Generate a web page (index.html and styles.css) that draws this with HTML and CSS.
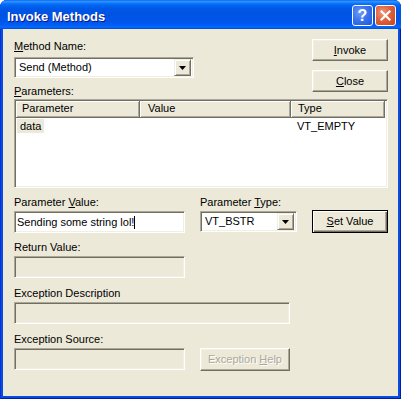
FILE: index.html
```html
<!DOCTYPE html>
<html>
<head>
<meta charset="utf-8">
<link rel="stylesheet" href="styles.css">
</head>
<body>
<div class="window">
  <div class="titlebar">
    <span class="title">Invoke Methods</span>
    <div class="tbtns">
      <div class="tbtn help">?</div>
      <div class="tbtn close">
        <svg width="11" height="11" viewBox="0 0 11 11"><path d="M1.5 1.5 L9.5 9.5 M9.5 1.5 L1.5 9.5" stroke="#fff" stroke-width="2.2" stroke-linecap="square"/></svg>
      </div>
    </div>
  </div>
  <div class="client">
    <div class="top">
      <div class="top-left">
        <div class="label"><u>M</u>ethod Name:</div>
        <div class="combo combo-method">
          <span class="combo-text">Send (Method)</span>
          <span class="drop"><svg width="7" height="4" viewBox="0 0 7 4"><path d="M0 0H7L3.5 4Z" fill="#000"/></svg></span>
        </div>
        <div class="label label-params"><u>P</u>arameters:</div>
      </div>
      <div class="top-right">
        <div class="btn"><u>I</u>nvoke</div>
        <div class="btn btn-close"><u>C</u>lose</div>
      </div>
    </div>

    <div class="listview">
      <div class="lv-header">
        <div class="hcell c1">Parameter</div>
        <div class="hcell c2">Value</div>
        <div class="hcell c3">Type</div>
      </div>
      <div class="lv-row">
        <div class="cell c1"><span class="sel">data</span></div>
        <div class="cell c2"></div>
        <div class="cell c3">VT_EMPTY</div>
      </div>
    </div>

    <div class="row row-value">
      <div class="col col1">
        <div class="label">Parameter <u>V</u>alue:</div>
        <div class="textbox">Sending some string lol!<span class="caret"></span></div>
      </div>
      <div class="col col2">
        <div class="label">Parameter <u>T</u>ype:</div>
        <div class="combo combo-type">
          <span class="combo-text">VT_BSTR</span>
          <span class="drop"><svg width="7" height="4" viewBox="0 0 7 4"><path d="M0 0H7L3.5 4Z" fill="#000"/></svg></span>
        </div>
      </div>
      <div class="col col3">
        <div class="btn btn-default"><u>S</u>et Value</div>
      </div>
    </div>

    <div class="row row-return">
      <div class="col col1">
        <div class="label">Return Value:</div>
        <div class="textbox disabled"></div>
      </div>
    </div>

    <div class="row row-desc">
      <div class="col">
        <div class="label">Exception Description</div>
        <div class="textbox disabled wide"></div>
      </div>
    </div>

    <div class="row row-source">
      <div class="col col1">
        <div class="label">Exception Source:</div>
        <div class="textbox disabled"></div>
      </div>
      <div class="col col2b">
        <div class="btn btn-disabled">Exception <u>H</u>elp</div>
      </div>
    </div>
  </div>
</div>
</body>
</html>
```

FILE: styles.css
```css
html, body {
  margin: 0;
  padding: 0;
  background: #ffffff;
}

.window {
  width: 401px;
  height: 399px;
  box-sizing: border-box;
  background: #0A4BE0;
  border-radius: 7px 7px 0 0;
  display: flex;
  flex-direction: column;
  overflow: hidden;
  box-shadow: inset 1px 0 #0831D9, inset -1px 0 #001EA0, inset 0 -1px #001EA0;
}

.titlebar {
  height: 29px;
  flex: none;
  display: flex;
  align-items: flex-start;
  background: linear-gradient(to bottom,
    #0058EE 0px, #3593FF 1px, #288EFF 2px, #127DFF 3px, #0470FC 4px,
    #0262EE 6px, #0057E5 9px, #0054E3 14px, #0055EB 22px, #005BF5 25px,
    #026AFE 27px, #0062EF 28px, #0043CF 29px);
  border-radius: 7px 7px 0 0;
}

.title {
  font-family: "Liberation Sans", Arial, sans-serif;
  font-weight: bold;
  font-size: 13px;
  color: #ffffff;
  line-height: 27px;
  padding: 3px 0 0 7px;
  text-shadow: 1px 1px #0A1883;
  flex: 1;
}

.tbtns {
  display: flex;
  gap: 2px;
  padding: 5px 5px 0 0;
}

.tbtn {
  width: 21px;
  height: 21px;
  box-sizing: border-box;
  border: 1px solid #ffffff;
  border-radius: 3px;
  display: flex;
  align-items: center;
  justify-content: center;
}

.help {
  background: radial-gradient(circle at 35% 35%, #6E9BF8 0%, #3C73EE 45%, #1F57DA 100%);
  color: #ffffff;
  font-family: "Liberation Sans", Arial, sans-serif;
  font-weight: bold;
  font-size: 16px;
  line-height: 19px;
}

.close {
  background: radial-gradient(circle at 35% 35%, #F09A7C 0%, #E0613E 45%, #C8431B 100%);
}

.client {
  flex: 1;
  margin: 0 3px 3px 3px;
  background: #ECE9D8;
  padding: 11px 0 0 11px;
  font-family: "Liberation Sans", Arial, sans-serif;
  font-size: 11px;
  color: #000000;
}

.label {
  line-height: 13px;
  height: 13px;
  margin-bottom: 2px;
  white-space: nowrap;
}

.top {
  display: flex;
}

.top-left {
  width: 180px;
}

.top-left .label {
  margin-bottom: 4px;
}

.top-left .label-params {
  margin-top: 7px;
  margin-bottom: 1px;
}

.top-right {
  margin-left: 118px;
  margin-top: -1px;
  width: 76px;
}

.btn {
  box-sizing: border-box;
  height: 22px;
  background: #ECE9D8;
  border: 1px solid;
  border-color: #ffffff #716F64 #716F64 #ffffff;
  box-shadow: inset -1px -1px #ACA899, inset 1px 1px #F1EFE2;
  text-align: center;
  line-height: 20px;
  white-space: nowrap;
}

.btn-close {
  margin-top: 9px;
}

.btn-default {
  height: 23px;
  border: 1px solid #000000;
  box-shadow: inset 1px 1px #ffffff, inset -1px -1px #716F64, inset -2px -2px #ACA899;
  line-height: 21px;
}

.btn-disabled {
  height: 23px;
  color: #ACA899;
  text-shadow: 1px 1px #ffffff;
  line-height: 21px;
}

.sunken {
  border: 1px solid;
}

.combo, .textbox, .listview {
  box-sizing: border-box;
  border: 1px solid;
  border-color: #ACA899 #ffffff #ffffff #ACA899;
  box-shadow: inset 1px 1px #716F64, inset -1px -1px #F1EFE2;
  background: #ffffff;
}

.combo {
  height: 21px;
  display: flex;
  align-items: center;
  padding: 2px 2px 2px 4px;
}

.combo-text {
  flex: 1;
  white-space: nowrap;
  line-height: 15px;
}

.drop {
  width: 17px;
  height: 17px;
  box-sizing: border-box;
  background: #ECE9D8;
  border: 1px solid;
  border-color: #F1EFE2 #716F64 #716F64 #F1EFE2;
  box-shadow: inset 1px 1px #ffffff, inset -1px -1px #ACA899;
  display: flex;
  align-items: center;
  justify-content: center;
}

.combo-method {
  width: 180px;
}

.combo-type {
  width: 97px;
}

.listview {
  width: 374px;
  height: 89px;
  padding: 1px 2px 2px 1px;
  background: #ffffff;
  box-shadow: inset 1px 1px #716F64, inset -1px -1px #F1EFE2;
}

.lv-header {
  display: flex;
  height: 17px;
}

.hcell {
  box-sizing: border-box;
  height: 17px;
  background: #ECE9D8;
  border-right: 1px solid #716F64;
  border-bottom: 1px solid #716F64;
  box-shadow: inset 1px 1px #ffffff, inset -1px -1px #ACA899;
  line-height: 15px;
  padding-left: 6px;
  white-space: nowrap;
}

.lv-header .c1 { width: 124px; }
.lv-header .c2 { width: 151px; padding-left: 8px; }
.lv-header .c3 { flex: 1; padding-left: 7px; }

.lv-row {
  display: flex;
  margin-top: 1px;
  height: 14px;
  line-height: 14px;
}

.cell {
  box-sizing: border-box;
  white-space: nowrap;
}

.lv-row .c1 { width: 124px; padding-left: 1px; }
.lv-row .c2 { width: 151px; }
.lv-row .c3 { flex: 1; padding-left: 6px; }

.sel {
  display: inline-block;
  background: #ECE9D8;
  padding: 0 3px;
  height: 14px;
}

.row {
  display: flex;
}

.row-value { margin-top: 8px; }
.row-return { margin-top: 8px; }
.row-desc { margin-top: 9px; }
.row-source { margin-top: 9px; }

.col1 {
  width: 171px;
  margin-right: 15px;
}

.col2 {
  width: 97px;
  margin-right: 15px;
}

.col3 {
  width: 76px;
  padding-top: 14px;
}

.col2b {
  width: 90px;
  padding-top: 15px;
}

.textbox {
  width: 171px;
  height: 22px;
  padding: 2px 2px 0 2px;
  line-height: 16px;
  white-space: nowrap;
}

.textbox.disabled {
  background: #ECE9D8;
}

.textbox.wide {
  width: 276px;
}

.caret {
  display: inline-block;
  width: 1px;
  height: 13px;
  background: #000000;
  vertical-align: -3px;
  margin-left: 0;
}
```
